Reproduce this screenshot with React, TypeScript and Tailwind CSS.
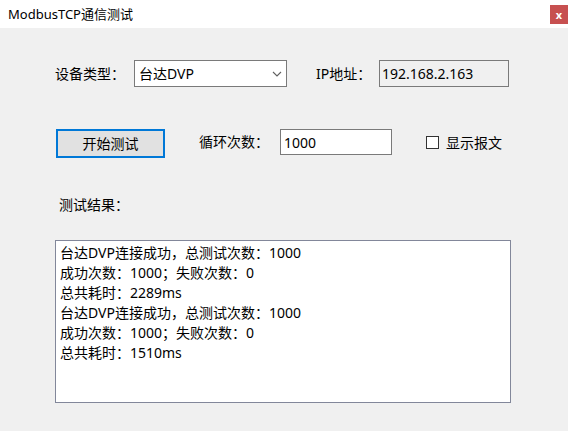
const font = "font-['Noto_Sans','Noto_Sans_CJK_SC',sans-serif]";

const logLines = [
  "台达DVP连接成功，总测试次数：1000",
  "成功次数：1000；失败次数：0",
  "总共耗时：2289ms",
  "台达DVP连接成功，总测试次数：1000",
  "成功次数：1000；失败次数：0",
  "总共耗时：1510ms",
];

const App = () => {
  return (
    <div className={`w-[568px] h-[431px] bg-[#f0f0f0] text-black ${font}`}>
      {/* Title bar */}
      <div className="h-[28px] bg-white flex justify-between">
        <span className="pl-[8px] text-[13px] leading-[28px]">ModbusTCP通信测试</span>
        <div className="mt-[5px] w-[18px] h-[19px] bg-[#c75050] flex items-center justify-center text-white text-[11px] font-bold leading-none">
          x
        </div>
      </div>

      {/* Device row */}
      <div className="mt-[32px] pl-[55px] flex items-center text-[14px]">
        <span className="w-[79px]">设备类型：</span>
        <div className="w-[153px] h-[27px] bg-white border border-[#7a7a7a] flex items-center justify-between pl-[4px] pr-[4px]">
          <span>台达DVP</span>
          <svg width="10" height="6" viewBox="0 0 10 6">
            <path d="M1 1 L5 5 L9 1" fill="none" stroke="#606060" strokeWidth="1.1" />
          </svg>
        </div>
        <span className="ml-[29px] w-[63px]">IP地址：</span>
        <div className="w-[130px] h-[27px] bg-[#f0f0f0] border border-[#7a7a7a] flex items-center pl-[2px]">
          192.168.2.163
        </div>
      </div>

      {/* Test row */}
      <div className="mt-[42px] pl-[56px] flex items-start text-[14px]">
        <button className="w-[109px] h-[29px] bg-[#e1e1e1] border-2 border-[#0078d7] flex items-center justify-center">
          开始测试
        </button>
        <span className="ml-[34px] w-[81px] h-[26px] leading-[26px]">循环次数：</span>
        <div className="w-[112px] h-[26px] bg-white border border-[#7a7a7a] flex items-center pl-[3px]">
          1000
        </div>
        <div className="ml-[34px] h-[26px] flex items-center">
          <span className="w-[13px] h-[13px] bg-white border border-[#333333]" />
          <span className="ml-[7px]">显示报文</span>
        </div>
      </div>

      {/* Results */}
      <div className="mt-[37px] pl-[59px] text-[14px] leading-[20px]">测试结果：</div>
      <div className="mt-[25px] ml-[55px] w-[456px] h-[163px] bg-white border border-[#82879a] pt-[2px] pl-[4px] text-[14px] leading-[20px]">
        {logLines.map((line, i) => (
          <div key={i}>{line}</div>
        ))}
      </div>
    </div>
  );
};

export default App;
